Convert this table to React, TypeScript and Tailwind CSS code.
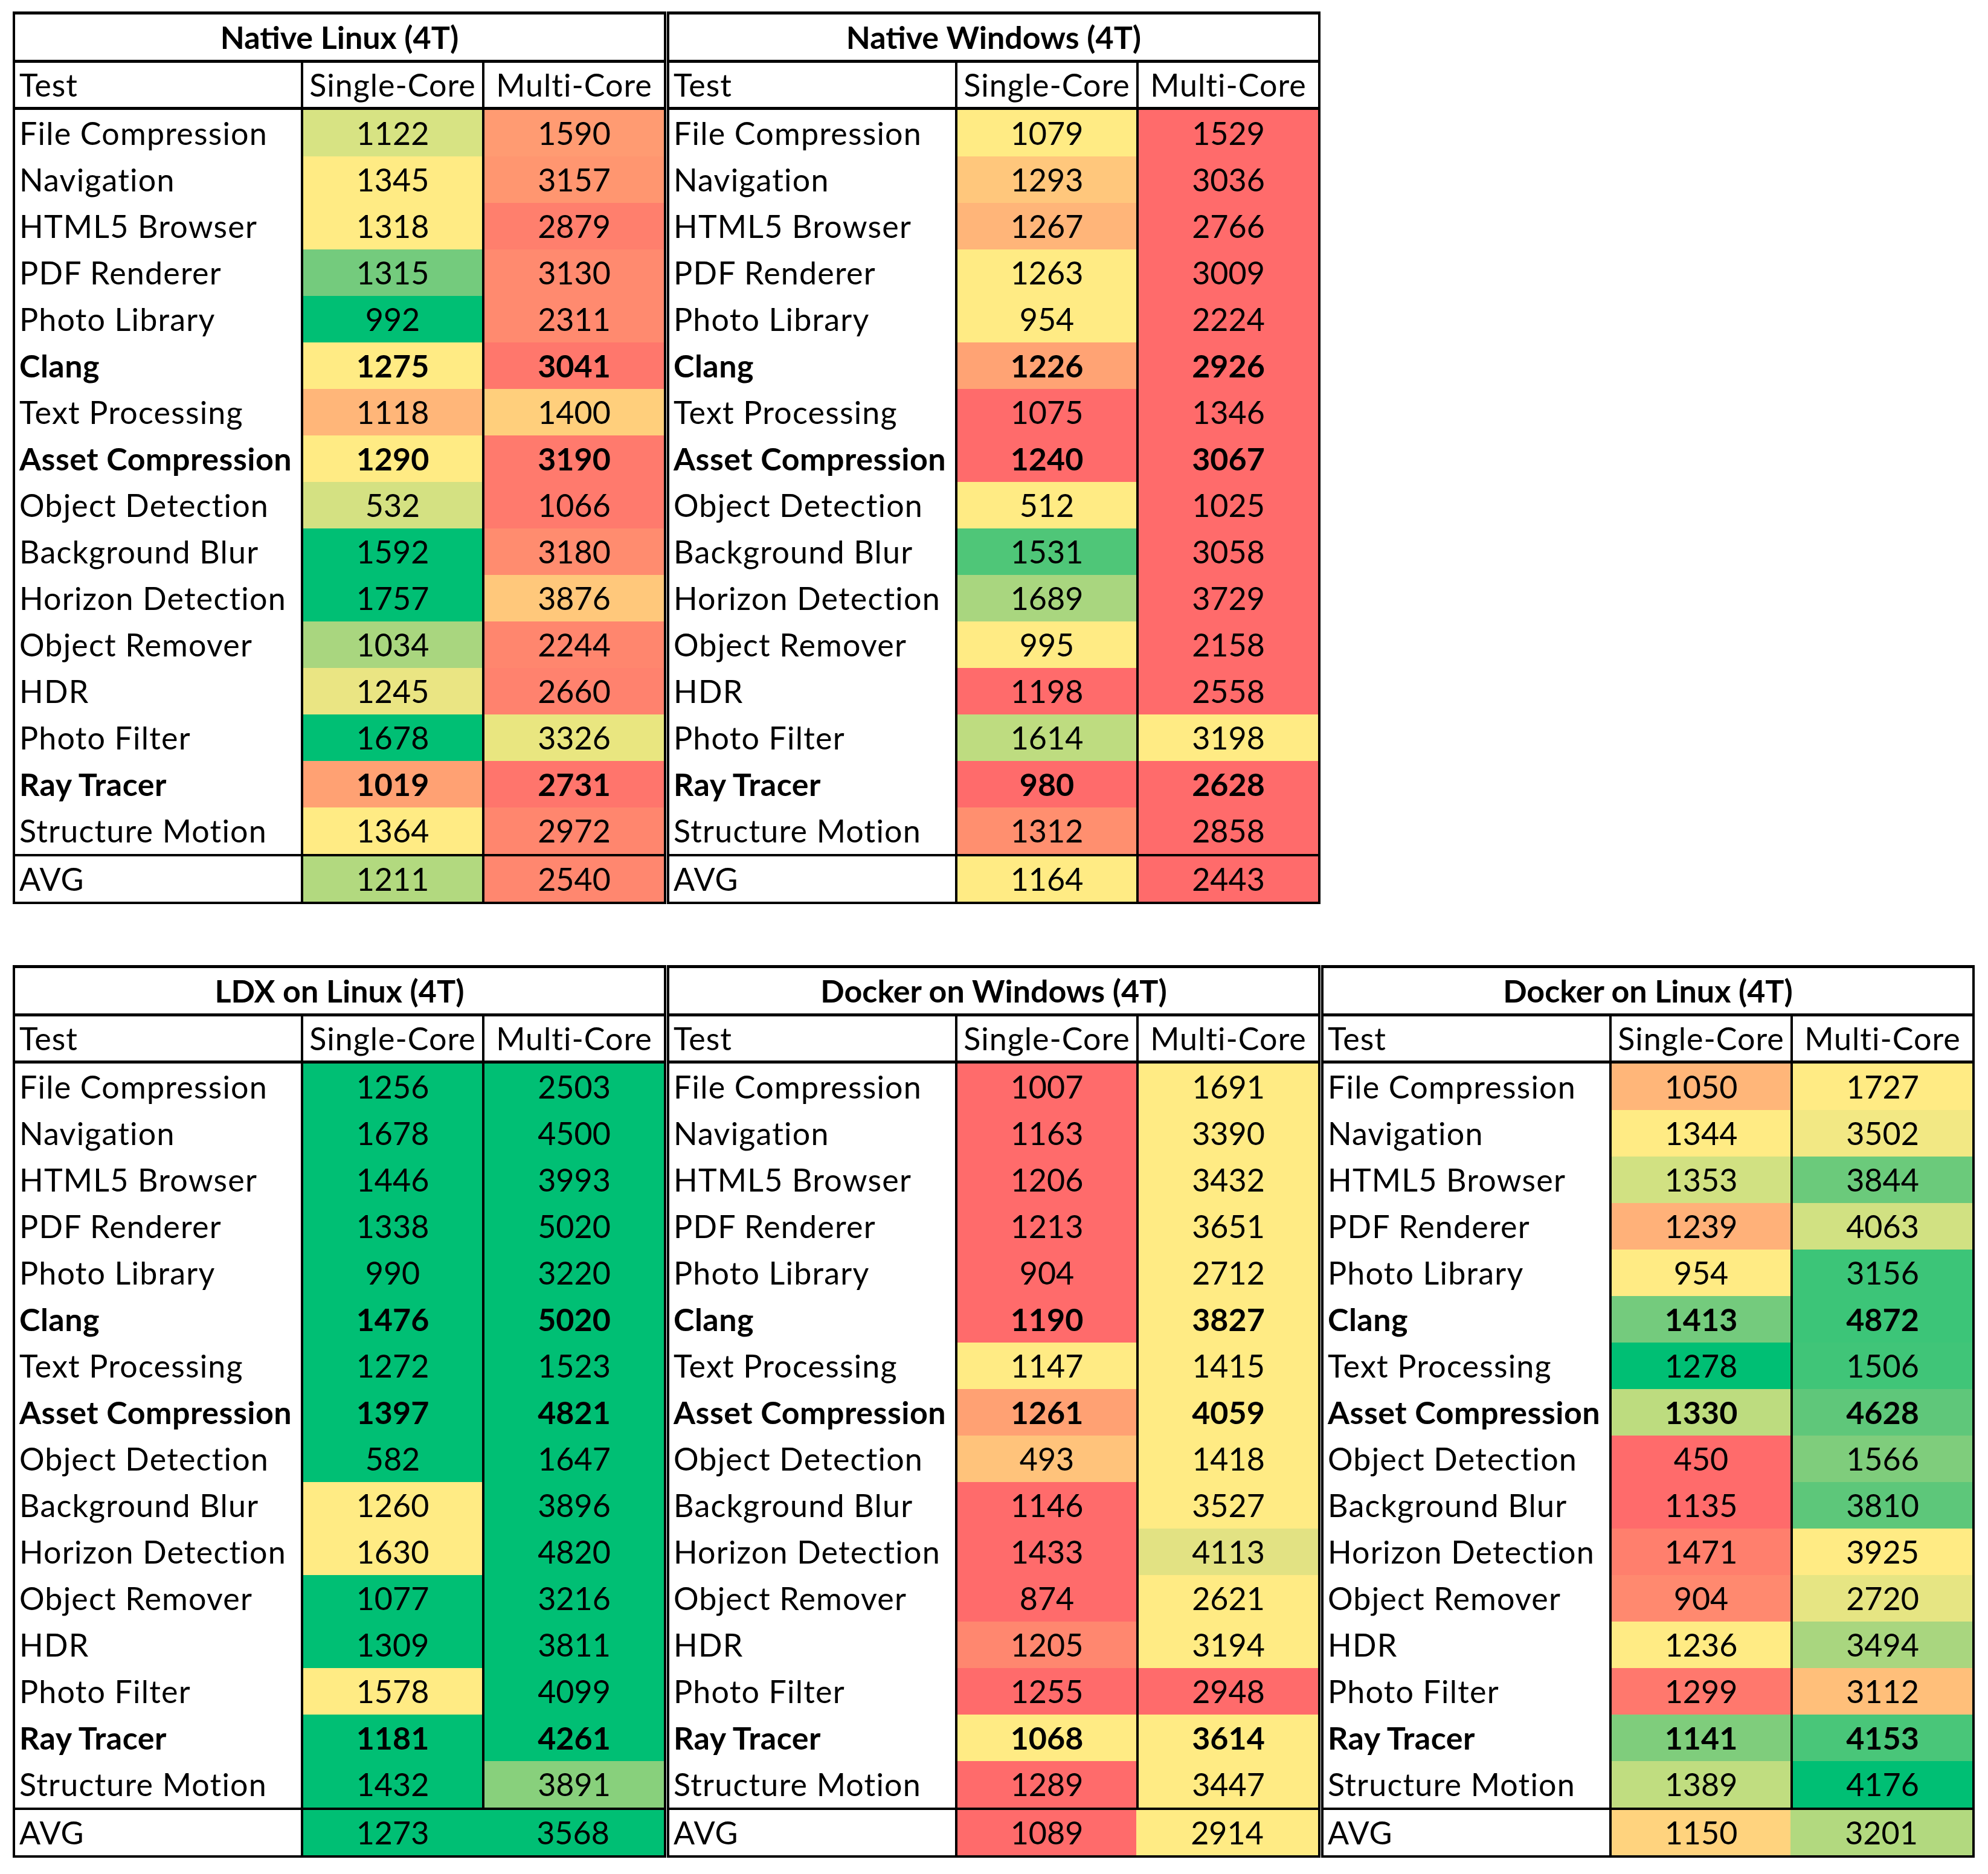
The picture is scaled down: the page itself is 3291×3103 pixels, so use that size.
import React from "react"

type Cell = [number, string]

interface Bench {
  title: string
  single: Cell[]
  multi: Cell[]
  avg: [Cell, Cell]
  mergedAvg?: boolean
}

// colour scale steps, written out so tailwind picks them up
const G = "bg-[#00bf74]"
const Y = "bg-[#ffeb84]"
const R = "bg-[#ff6b6b]"

const tests: [string, boolean][] = [
  ["File Compression", false],
  ["Navigation", false],
  ["HTML5 Browser", false],
  ["PDF Renderer", false],
  ["Photo Library", false],
  ["Clang", true],
  ["Text Processing", false],
  ["Asset Compression", true],
  ["Object Detection", false],
  ["Background Blur", false],
  ["Horizon Detection", false],
  ["Object Remover", false],
  ["HDR", false],
  ["Photo Filter", false],
  ["Ray Tracer", true],
  ["Structure Motion", false],
]

const nativeLinux: Bench = {
  title: "Native Linux (4T)",
  single: [
    [1122, "bg-[#d7e383]"],
    [1345, Y],
    [1318, Y],
    [1315, "bg-[#74cb7d]"],
    [992, G],
    [1275, Y],
    [1118, "bg-[#ffb679]"],
    [1290, Y],
    [532, "bg-[#d4e182]"],
    [1592, G],
    [1757, G],
    [1034, "bg-[#a9d67f]"],
    [1245, "bg-[#eae583]"],
    [1678, G],
    [1019, "bg-[#ffa173]"],
    [1364, Y],
  ],
  multi: [
    [1590, "bg-[#ff9b72]"],
    [3157, "bg-[#ff9670]"],
    [2879, "bg-[#ff7f6d]"],
    [3130, "bg-[#ff8a6f]"],
    [2311, "bg-[#ff8a6f]"],
    [3041, "bg-[#ff776c]"],
    [1400, "bg-[#ffcf7c]"],
    [3190, "bg-[#ff7a6d]"],
    [1066, "bg-[#ff7a6d]"],
    [3180, "bg-[#ff8c6f]"],
    [3876, "bg-[#ffc87b]"],
    [2244, "bg-[#ff866e]"],
    [2660, "bg-[#ff826e]"],
    [3326, "bg-[#e9e680]"],
    [2731, "bg-[#ff756c]"],
    [2972, "bg-[#ff866e]"],
  ],
  avg: [
    [1211, "bg-[#b2d97f]"],
    [2540, "bg-[#ff876f]"],
  ],
}

const nativeWindows: Bench = {
  title: "Native Windows (4T)",
  single: [
    [1079, Y],
    [1293, "bg-[#ffc77c]"],
    [1267, "bg-[#ffb579]"],
    [1263, Y],
    [954, Y],
    [1226, "bg-[#ffa374]"],
    [1075, R],
    [1240, R],
    [512, Y],
    [1531, "bg-[#4fc678]"],
    [1689, "bg-[#a9d67f]"],
    [995, Y],
    [1198, R],
    [1614, "bg-[#bedc80]"],
    [980, R],
    [1312, "bg-[#ff8f6f]"],
  ],
  multi: [
    [1529, R],
    [3036, R],
    [2766, R],
    [3009, R],
    [2224, R],
    [2926, R],
    [1346, R],
    [3067, R],
    [1025, R],
    [3058, R],
    [3729, R],
    [2158, R],
    [2558, R],
    [3198, Y],
    [2628, R],
    [2858, R],
  ],
  avg: [
    [1164, Y],
    [2443, R],
  ],
}

const ldxLinux: Bench = {
  title: "LDX on Linux (4T)",
  single: [
    [1256, G],
    [1678, G],
    [1446, G],
    [1338, G],
    [990, G],
    [1476, G],
    [1272, G],
    [1397, G],
    [582, G],
    [1260, Y],
    [1630, Y],
    [1077, G],
    [1309, G],
    [1578, Y],
    [1181, G],
    [1432, G],
  ],
  multi: [
    [2503, G],
    [4500, G],
    [3993, G],
    [5020, G],
    [3220, G],
    [5020, G],
    [1523, G],
    [4821, G],
    [1647, G],
    [3896, G],
    [4820, G],
    [3216, G],
    [3811, G],
    [4099, G],
    [4261, G],
    [3891, "bg-[#88d07c]"],
  ],
  avg: [
    [1273, G],
    [3568, G],
  ],
  mergedAvg: true,
}

const dockerWindows: Bench = {
  title: "Docker on Windows (4T)",
  single: [
    [1007, R],
    [1163, R],
    [1206, R],
    [1213, R],
    [904, R],
    [1190, R],
    [1147, Y],
    [1261, "bg-[#ffa173]"],
    [493, "bg-[#ffc37b]"],
    [1146, R],
    [1433, R],
    [874, R],
    [1205, "bg-[#ff876f]"],
    [1255, R],
    [1068, Y],
    [1289, R],
  ],
  multi: [
    [1691, Y],
    [3390, Y],
    [3432, Y],
    [3651, Y],
    [2712, Y],
    [3827, Y],
    [1415, Y],
    [4059, Y],
    [1418, Y],
    [3527, Y],
    [4113, "bg-[#e2e283]"],
    [2621, Y],
    [3194, Y],
    [2948, R],
    [3614, Y],
    [3447, Y],
  ],
  avg: [
    [1089, R],
    [2914, Y],
  ],
  mergedAvg: true,
}

const dockerLinux: Bench = {
  title: "Docker on Linux (4T)",
  single: [
    [1050, "bg-[#ffb679]"],
    [1344, Y],
    [1353, "bg-[#d1e182]"],
    [1239, "bg-[#ffb179]"],
    [954, Y],
    [1413, "bg-[#74cb7d]"],
    [1278, G],
    [1330, "bg-[#bddc7f]"],
    [450, R],
    [1135, R],
    [1471, "bg-[#ff7f6d]"],
    [904, "bg-[#ff896f]"],
    [1236, Y],
    [1299, "bg-[#ff786d]"],
    [1141, "bg-[#7fcd7c]"],
    [1389, "bg-[#c0dd80]"],
  ],
  multi: [
    [1727, Y],
    [3502, "bg-[#f2e884]"],
    [3844, "bg-[#6bca7b]"],
    [4063, "bg-[#d1e182]"],
    [3156, "bg-[#3cc578]"],
    [4872, "bg-[#3cc578]"],
    [1506, "bg-[#40c578]"],
    [4628, "bg-[#5fc77a]"],
    [1566, "bg-[#7fcd7c]"],
    [3810, "bg-[#5dc77a]"],
    [3925, Y],
    [2720, "bg-[#e6e583]"],
    [3494, "bg-[#a9d67f]"],
    [3112, "bg-[#ffbf7a]"],
    [4153, "bg-[#49c679]"],
    [4176, G],
  ],
  avg: [
    [1150, "bg-[#ffd37e]"],
    [3201, "bg-[#b2d97f]"],
  ],
  mergedAvg: true,
}

function ScoreTable({ bench }: { bench: Bench }) {
  return (
    <div className="w-[1082px] border-x-4 border-t-[5px] border-b-4 border-black bg-white">
      {/* title */}
      <div className="h-[80px] border-b-[5px] border-black text-center font-bold leading-[75px]">
        {bench.title}
      </div>

      {/* column heads */}
      <div className="grid h-[78px] grid-cols-[473px_300px_301px] border-b-[5px] border-black leading-[73px] tracking-[1px]">
        <div className="pl-[7px]">Test</div>
        <div className="border-l-4 border-black text-center">Single-Core</div>
        <div className="border-l-4 border-black text-center">Multi-Core</div>
      </div>

      {/* rows */}
      {tests.map(([name, bold], i) => (
        <div
          key={name}
          className={`grid h-[77px] grid-cols-[473px_300px_301px] leading-[77px] ${bold ? "font-bold" : ""}`}
        >
          <div className={`whitespace-nowrap pl-[7px] ${bold ? "tracking-[0.5px]" : "tracking-[1.2px]"}`}>{name}</div>
          <div className={`border-l-4 border-black text-center ${bench.single[i][1]}`}>{bench.single[i][0]}</div>
          <div className={`border-l-4 border-black text-center ${bench.multi[i][1]}`}>{bench.multi[i][0]}</div>
        </div>
      ))}

      {/* average */}
      <div className="grid h-[79px] grid-cols-[473px_300px_301px] border-t-4 border-black leading-[75px]">
        <div className="pl-[7px] tracking-[1px]">AVG</div>
        <div className={`border-l-4 border-black text-center ${bench.avg[0][1]}`}>{bench.avg[0][0]}</div>
        <div className={`text-center ${bench.mergedAvg ? "" : "border-l-4 border-black"} ${bench.avg[1][1]}`}>
          {bench.avg[1][0]}
        </div>
      </div>
    </div>
  )
}

export default function App() {
  return (
    <div className="min-h-[3103px] w-[3291px] bg-white pl-[21px] pt-[19px] font-['Lato',sans-serif] text-[52px] text-black">
      <div className="flex gap-px">
        <ScoreTable bench={nativeLinux} />
        <ScoreTable bench={nativeWindows} />
      </div>
      <div className="mt-[101px] flex gap-px">
        <ScoreTable bench={ldxLinux} />
        <ScoreTable bench={dockerWindows} />
        <ScoreTable bench={dockerLinux} />
      </div>
    </div>
  )
}
